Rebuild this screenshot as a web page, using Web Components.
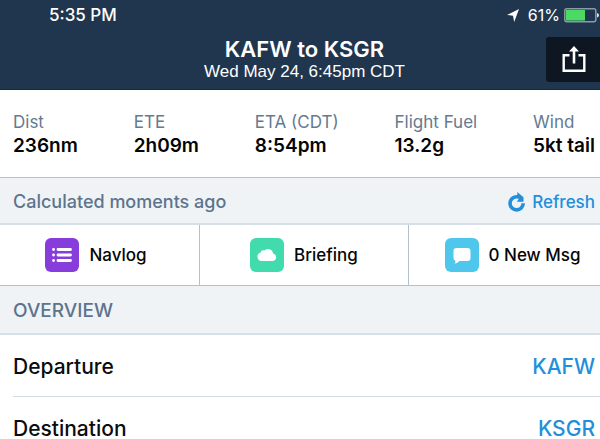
<!DOCTYPE html>
<html lang="en">
<head>
<meta charset="utf-8">
<meta name="viewport" content="width=device-width, initial-scale=1">
<title>KAFW to KSGR</title>
<style>
  html { scrollbar-width: none; }
  body { margin: 0; background: #fff; color: #0b0c0e; font-family: Inter, "Liberation Sans", sans-serif; }
</style>
</head>
<body>
<flight-page></flight-page>
<script>
const define = (name, html) => {
  const template = document.createElement('template');
  template.innerHTML = html;
  customElements.define(name, class extends HTMLElement {
    constructor() {
      super();
      this.attachShadow({ mode: 'open' }).append(template.content.cloneNode(true));
    }
  });
};

define('status-bar', `
<style>
  :host { display: flex; justify-content: space-between; align-items: center; height: 30px; padding: 0 1px 0 49px; color: #fff; }
  time { font: 500 17px/30px Inter, sans-serif; }
  .right { display: flex; align-items: center; font: 400 16px/30px Inter, sans-serif; }
  .arrow { margin-right: 9px; }
  .battery { margin-left: 4px; }
  svg { display: block; }
</style>
<time>5:35 PM</time>
<div class="right">
  <svg class="arrow" width="12" height="13" viewBox="0 0 12 13"><path fill="#fff" d="M12 0 7.2 13 6 6.7 0 6z"/></svg>
  <span>61%</span>
  <svg class="battery" width="35" height="15" viewBox="0 0 35 15"><rect x=".8" y=".8" width="31" height="13" rx="2" fill="none" stroke="#8c99a8" stroke-width="1.5"/><rect x="2" y="2" width="19" height="10.6" fill="#4cd964"/><path fill="#dfe3e8" d="M33 5q2 .4 2 2.300t-2 2.300z"/></svg>
</div>`);

define('title-bar', `
<style>
  :host { display: grid; grid-template-columns: 54px 1fr 54px; align-items: center; height: 59px; padding-left: 9px; color: #fff; }
  .titles { grid-column: 2; text-align: center; }
  h1 { margin: 0; font: 600 22px/24px Inter, sans-serif; }
  p { margin: 0; font: 400 17px/22px "Liberation Sans", sans-serif; }
  button { display: grid; place-items: center; height: 45px; padding: 0 0 0 2px; border: 0; border-radius: 3px 0 0 3px; background: #0d1621; }
</style>
<div class="titles"><h1><slot name="title"></slot></h1><p><slot></slot></p></div>
<button type="button" aria-label="Share"><svg width="24" height="27" viewBox="0 0 24 27" fill="none" stroke="#fff"><path stroke-width="2.400" d="M7.500 9.200H1.700v15.600h20.600V9.200h-5.800"/><path stroke-width="2.600" d="M12 17.500V4"/><path fill="#fff" stroke="none" d="M12 0l5 5.600H7z"/></svg></button>`);

define('flight-stat', `
<style>
  :host { display: block; white-space: nowrap; }
  dl { margin: 0; }
  dt { font: 400 17px/24px Inter, sans-serif; color: #647a90; }
  dd { margin: 0; font: 600 19px/24px Inter, sans-serif; color: #050505; }
</style>
<dl><dt><slot name="label"></slot></dt><dd><slot></slot></dd></dl>`);

define('section-bar', `
<style>
  :host { display: flex; justify-content: space-between; align-items: center; padding: 2px 5px 0 13px; height: 43px; background: #eff3f6; border-bottom: 2px solid #d6e0e8; color: #5d748c; font: 500 18px/24px Inter, sans-serif; }
</style>
<slot></slot>`);

define('refresh-button', `
<style>
  :host { display: block; }
  button { display: flex; align-items: center; gap: 7px; padding: 0; border: 0; background: none; color: #238fdb; font: 500 17px/24px Inter, sans-serif; }
</style>
<button type="button"><svg width="17" height="20" viewBox="0 0 17 20"><path fill="none" stroke="#238fdb" stroke-width="3.600" d="M10.500 4.700H8.400A6.600 6.600 0 1 0 15.200 11.300"/><path fill="#238fdb" d="M9.300 0 15.500 5.200v4.600H8.800L11 6.500H9.300z"/></svg><slot></slot></button>`);

define('app-tile', `
<style>
  :host { display: grid; border-right: 1px solid #b3c0cd; background: #fff; }
  :host(:last-child) { border-right: 0; }
  button { display: flex; justify-content: center; align-items: center; gap: 10px; padding: 0; padding-left: var(--start, 0); padding-right: var(--end, 0); border: 0; background: none; color: #050505; font: 500 17px/24px Inter, sans-serif; }
</style>
<button type="button"><slot name="icon"></slot><span><slot></slot></span></button>`);

define('airport-row', `
<style>
  :host { display: flex; justify-content: space-between; align-items: center; height: 59px; margin-left: 13px; padding: 2px 5px 0 0; border-bottom: 1px solid #d3dce4; font: 500 21px/26px Inter, sans-serif; color: #0b0c0e; }
  a { color: #238fdb; text-decoration: none; }
</style>
<span><slot></slot></span><a href="#"><slot name="code"></slot></a>`);

define('flight-page', `
<style>
  :host { display: block; }
  header { background: #20364f; border-bottom: 1px solid #14283e; }
  .stats { display: flex; justify-content: space-between; padding: 20px 5px 19px 13px; border-bottom: 1px solid #b3c0cd; }
  .tiles { display: grid; grid-template-columns: 200fr 209fr 191fr; height: 60px; border-bottom: 1px solid #b3c0cd; }
  .overview { height: 45px; }
  h2 { margin: 0; font: 500 19px/24px Inter, sans-serif; }
  svg { display: block; }
</style>
<header>
  <status-bar></status-bar>
  <title-bar><span slot="title">KAFW to KSGR</span>Wed May 24, 6:45pm CDT</title-bar>
</header>
<main>
  <div class="stats">
    <flight-stat><span slot="label">Dist</span>236nm</flight-stat>
    <flight-stat><span slot="label">ETE</span>2h09m</flight-stat>
    <flight-stat><span slot="label">ETA (CDT)</span>8:54pm</flight-stat>
    <flight-stat><span slot="label">Flight Fuel</span>13.2g</flight-stat>
    <flight-stat><span slot="label">Wind</span>5kt tail</flight-stat>
  </div>
  <section-bar><span>Calculated moments ago</span><refresh-button>Refresh</refresh-button></section-bar>
  <div class="tiles">
    <app-tile style="--end:7px"><svg slot="icon" width="34" height="34" viewBox="0 0 34 34"><rect width="34" height="34" rx="6" fill="#873ddb"/><path stroke="#fff" stroke-width="2.800" stroke-linecap="round" d="M8.500 11.500h.1M8.500 17h.1M8.500 22.500h.1M13 11.500h12.500M13 17h12.500M13 22.500h12.500"/></svg>Navlog</app-tile>
    <app-tile><svg slot="icon" width="34" height="34" viewBox="0 0 34 34"><rect width="34" height="34" rx="6" fill="#42dbad"/><path fill="#fff" d="M11.500 23a4.300 4.300 0 0 1-1-8.400 3.200 3.200 0 0 1 4-2.200 5.200 5.200 0 0 1 8.700 3A3.900 3.900 0 0 1 23 23z"/></svg>Briefing</app-tile>
    <app-tile style="--start:16px"><svg slot="icon" width="34" height="34" viewBox="0 0 34 34"><rect width="34" height="34" rx="6" fill="#4fc7ec"/><path fill="#fff" d="M11.500 10h11a3 3 0 0 1 3 3v7a3 3 0 0 1-3 3h-8.300c-1 1.500-2.500 2.300-4.700 2.500.8-.8 1.100-1.600 1-2.600A3 3 0 0 1 8.500 20v-7a3 3 0 0 1 3-3z"/></svg>0 New Msg</app-tile>
  </div>
  <section-bar class="overview"><h2>OVERVIEW</h2></section-bar>
  <airport-row>Departure<span slot="code">KAFW</span></airport-row>
  <airport-row>Destination<span slot="code">KSGR</span></airport-row>
</main>`);
</script>
</body>
</html>
